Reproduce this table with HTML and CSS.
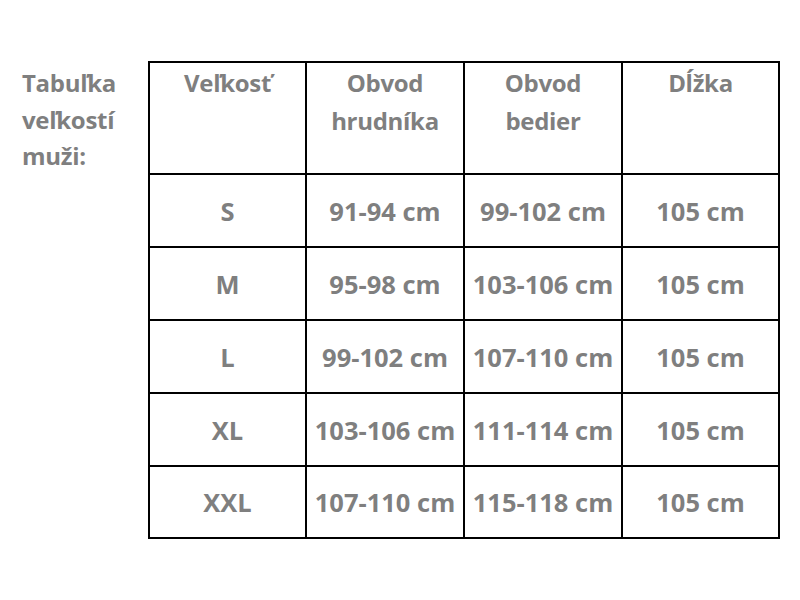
FILE: index.html
```html
<!DOCTYPE html>
<html lang="sk">
<head>
<meta charset="utf-8">
<title>Tabuľka veľkostí muži</title>
<link rel="stylesheet" href="styles.css">
</head>
<body>
<div class="page">
  <div class="label">Tabuľka<br>veľkostí<br>muži:</div>
  <div class="table">
    <div class="cell head">Veľkosť</div>
    <div class="cell head">Obvod<br>hrudníka</div>
    <div class="cell head">Obvod<br>bedier</div>
    <div class="cell head">Dĺžka</div>

    <div class="cell">S</div>
    <div class="cell">91-94 cm</div>
    <div class="cell">99-102 cm</div>
    <div class="cell">105 cm</div>

    <div class="cell">M</div>
    <div class="cell">95-98 cm</div>
    <div class="cell">103-106 cm</div>
    <div class="cell">105 cm</div>

    <div class="cell">L</div>
    <div class="cell">99-102 cm</div>
    <div class="cell">107-110 cm</div>
    <div class="cell">105 cm</div>

    <div class="cell">XL</div>
    <div class="cell">103-106 cm</div>
    <div class="cell">111-114 cm</div>
    <div class="cell">105 cm</div>

    <div class="cell">XXL</div>
    <div class="cell">107-110 cm</div>
    <div class="cell">115-118 cm</div>
    <div class="cell">105 cm</div>
  </div>
</div>
</body>
</html>
```

FILE: styles.css
```css
html, body {
  margin: 0;
  padding: 0;
  background: #ffffff;
}

.page {
  display: flex;
  align-items: flex-start;
  padding-top: 61px;
  font-family: "Open Sans", "Liberation Sans", sans-serif;
  font-weight: 700;
  color: #7f7f7f;
  font-size: 25.5px;
  line-height: 38px;
}

.label {
  width: 148px;
  flex: none;
  box-sizing: border-box;
  padding-left: 22px;
  padding-top: 4px;
  font-size: 24px;
  letter-spacing: -0.3px;
  line-height: 36.5px;
}

.table {
  display: grid;
  grid-template-columns: 155px 156px 156px 155px;
  grid-template-rows: 110px 71px 71px 71px 71px 70px;
  gap: 2px;
  padding: 2px;
  background: #000000;
}

.cell {
  background: #ffffff;
  display: flex;
  align-items: center;
  justify-content: center;
  text-align: center;
  box-sizing: border-box;
  white-space: nowrap;
}

.cell.head {
  align-items: flex-start;
  padding-top: 1px;
  font-size: 24px;
  letter-spacing: -0.3px;
}
```
